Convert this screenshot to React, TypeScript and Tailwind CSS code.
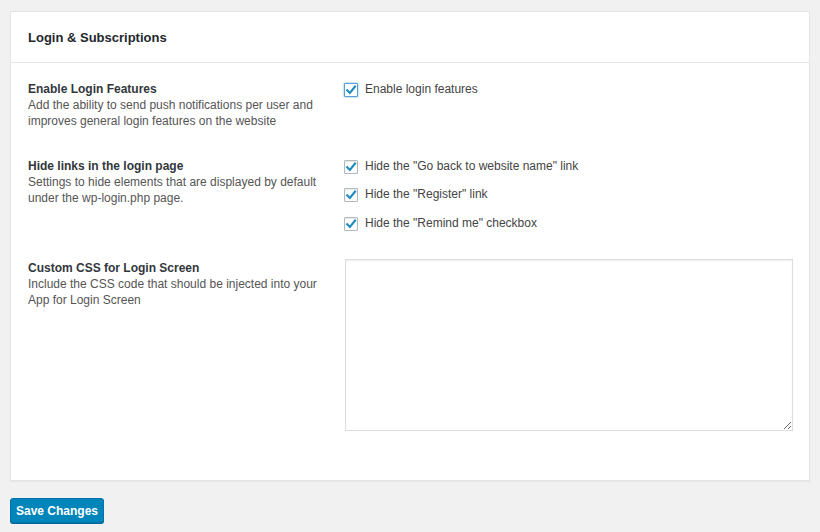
import React from "react";

const CheckBox = ({ focused = false }: { focused?: boolean }) => (
  <span
    className={
      "flex h-[14px] w-[14px] shrink-0 items-center justify-center rounded-[1px] border bg-white " +
      (focused
        ? "border-[#5b9dd9] shadow-[0_0_2px_rgba(30,140,190,0.8)]"
        : "border-[#b4b9be] shadow-[inset_0_1px_2px_rgba(0,0,0,0.1)]")
    }
  >
    <svg width="12" height="12" viewBox="0 0 12 12">
      <path
        d="M2.2 6.2 L4.9 8.9 L10 2.6"
        fill="none"
        stroke="#1e8cbe"
        strokeWidth="2.1"
        strokeLinecap="square"
        strokeLinejoin="miter"
      />
    </svg>
  </span>
);

const Option = ({ label, focused }: { label: string; focused?: boolean }) => (
  <label className="flex h-[16px] items-center gap-[7px] text-[12px] leading-[16px] text-[#444]">
    <span className="mt-[3px]">
      <CheckBox focused={focused} />
    </span>
    <span className="mt-[1px]">{label}</span>
  </label>
);

const FieldLabel = ({ title, desc }: { title: string; desc: React.ReactNode }) => (
  <div className="w-[316px] shrink-0 pt-[1px] text-[12px] leading-[16px]">
    <div className="font-bold text-[#32373c]">{title}</div>
    <div className="text-[#555]">{desc}</div>
  </div>
);

export default function App() {
  return (
    <div
      className="min-h-[532px] bg-[#f1f1f1] px-[10px] pt-[11px]"
      style={{ fontFamily: '"Liberation Sans", Arial, sans-serif' }}
    >
      <div className="w-[800px] border border-[#e5e5e5] bg-white shadow-[0_1px_1px_rgba(0,0,0,0.04)]">
        <div className="flex h-[51px] items-center border-b border-[#e5e5e5] px-[17px]">
          <h2 className="pt-[1px] text-[13px] font-bold text-[#23282d]">Login &amp; Subscriptions</h2>
        </div>

        <div className="pb-[49px] pl-[17px] pr-[16px] pt-[17px]">
          <div className="flex">
            <FieldLabel
              title="Enable Login Features"
              desc={
                <>
                  Add the ability to send push notifications per user and
                  <br />
                  improves general login features on the website
                </>
              }
            />
            <div className="flex-1">
              <Option label="Enable login features" focused />
            </div>
          </div>

          <div className="mt-[28px] flex">
            <FieldLabel
              title="Hide links in the login page"
              desc={
                <>
                  Settings to hide elements that are displayed by default
                  <br />
                  under the wp-login.php page.
                </>
              }
            />
            <div className="flex flex-1 flex-col gap-[12.5px]">
              <Option label='Hide the "Go back to website name" link' />
              <Option label='Hide the "Register" link' />
              <Option label='Hide the "Remind me" checkbox' />
            </div>
          </div>

          <div className="mt-[29px] flex">
            <FieldLabel
              title="Custom CSS for Login Screen"
              desc={
                <>
                  Include the CSS code that should be injected into your
                  <br />
                  App for Login Screen
                </>
              }
            />
            <div className="flex-1 pl-px">
              <textarea className="block h-[172px] w-full resize border border-[#ddd] bg-white shadow-[inset_0_1px_2px_rgba(0,0,0,0.07)] outline-none" />
            </div>
          </div>
        </div>
      </div>

      <button className="mt-[17px] h-[25px] w-[94px] rounded-[3px] border border-[#0073aa] bg-[#0085ba] text-[12px] font-bold text-white shadow-[0_1px_0_#006799]">
        Save Changes
      </button>
    </div>
  );
}
